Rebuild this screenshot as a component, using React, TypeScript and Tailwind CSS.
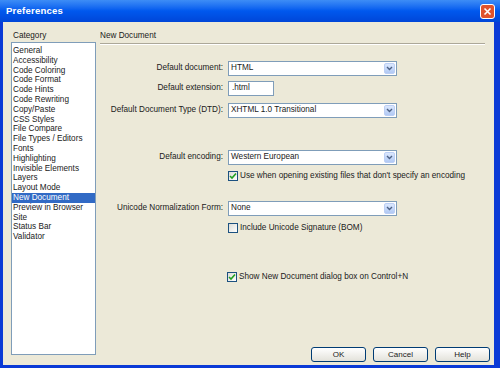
import React from 'react';

const categories = [
  'General',
  'Accessibility',
  'Code Coloring',
  'Code Format',
  'Code Hints',
  'Code Rewriting',
  'Copy/Paste',
  'CSS Styles',
  'File Compare',
  'File Types / Editors',
  'Fonts',
  'Highlighting',
  'Invisible Elements',
  'Layers',
  'Layout Mode',
  'New Document',
  'Preview in Browser',
  'Site',
  'Status Bar',
  'Validator',
];

function Select({ value }: { value: string }) {
  return (
    <div className="flex items-center w-[169px] h-[15px] bg-white border border-[#7f9db9] pl-[2px] pr-[1px]">
      <span className="flex-1 leading-none">{value}</span>
      <span className="w-[11px] h-[11px] rounded-[2px] bg-gradient-to-b from-[#dce8fd] to-[#b1c9f4] border border-[#bccff5] flex items-center justify-center">
        <svg width="7" height="5" viewBox="0 0 7 5">
          <path d="M1 1 L3.5 3.5 L6 1" stroke="#4d6185" strokeWidth="1.4" fill="none" />
        </svg>
      </span>
    </div>
  );
}

function Check({ checked, label }: { checked: boolean; label: string }) {
  return (
    <div className="flex items-center h-[10px] gap-[2px]">
      <span className="w-[10px] h-[10px] border border-[#1c5180] bg-gradient-to-br from-[#dcdcd7] to-white flex items-center justify-center">
        {checked && (
          <svg width="8" height="8" viewBox="0 0 8 8">
            <path d="M1 4 L3 6 L7 1.5" stroke="#21a121" strokeWidth="1.6" fill="none" />
          </svg>
        )}
      </span>
      <span className="leading-none">{label}</span>
    </div>
  );
}

function Row({ label, children, className }: { label: string; children: React.ReactNode; className?: string }) {
  return (
    <div className={'flex items-center gap-[5px] ' + (className ?? '')}>
      <span className="w-[123px] text-right leading-none">{label}</span>
      {children}
    </div>
  );
}

function Button({ children }: { children: React.ReactNode }) {
  return (
    <button className="w-[55px] h-[15px] rounded-[3px] border border-[#003c74] bg-gradient-to-b from-white to-[#e3e2da] text-[8px] leading-none">
      {children}
    </button>
  );
}

export default function App() {
  return (
    <div className="w-[500px] h-[368px] flex flex-col text-[8.2px] text-[#1a1a1a] font-['Liberation_Sans',Arial,sans-serif] overflow-hidden">
      <div className="h-[22px] flex items-center justify-between pl-[6px] pr-[5px] bg-gradient-to-b from-[#3d8df6] via-[#0058ee] to-[#0046d8]">
        <span className="text-white font-bold text-[9.6px] tracking-[0.2px]">Preferences</span>
        <span className="w-[15px] h-[15px] rounded-[3px] border border-white bg-[#e0532d] flex items-center justify-center">
          <svg width="9" height="9" viewBox="0 0 9 9">
            <path d="M1.5 1.5 L7.5 7.5 M7.5 1.5 L1.5 7.5" stroke="white" strokeWidth="1.6" />
          </svg>
        </span>
      </div>
      <div className="flex-1 flex bg-[#ece9d8] border-l-[3px] border-r-[6px] border-b-[3px] border-[#0a3ad6] pl-[8px] pt-[7px] pb-[3px]">
        <div className="w-[85px] flex flex-col pb-[7px]">
          <div className="h-[13px] leading-[13px] pl-[2px]">Category</div>
          <div className="flex-1 bg-white border border-[#7f9db9] pt-[3px]">
            {categories.map((c) => (
              <div
                key={c}
                className={
                  'h-[9.8px] leading-[9.8px] pl-[1px] whitespace-nowrap ' +
                  (c === 'New Document' ? 'bg-[#316ac5] text-white' : '')
                }
              >
                {c}
              </div>
            ))}
          </div>
        </div>
        <div className="w-[390px] ml-[4px] flex flex-col">
          <div className="h-[13px] leading-[13px]">New Document</div>
          <div className="mt-[1px] mr-[5px] border-t border-[#aca899] border-b border-b-white" />
          <Row label="Default document:" className="mt-[16px]">
            <Select value="HTML" />
          </Row>
          <Row label="Default extension:" className="mt-[5px]">
            <div className="w-[46px] h-[15px] bg-white border border-[#7f9db9] pl-[3px] flex items-center leading-none">.html</div>
          </Row>
          <Row label="Default Document Type (DTD):" className="mt-[7px]">
            <Select value="XHTML 1.0 Transitional" />
          </Row>
          <Row label="Default encoding:" className="mt-[32px]">
            <Select value="Western European" />
          </Row>
          <div className="mt-[6px] pl-[128px]">
            <Check checked label="Use when opening existing files that don't specify an encoding" />
          </div>
          <Row label="Unicode Normalization Form:" className="mt-[20px]">
            <Select value="None" />
          </Row>
          <div className="mt-[7px] pl-[128px]">
            <Check checked={false} label="Include Unicode Signature (BOM)" />
          </div>
          <div className="mt-[39px] pl-[127px]">
            <Check checked label="Show New Document dialog box on Control+N" />
          </div>
          <div className="mt-auto flex justify-end gap-[7px]">
            <Button>OK</Button>
            <Button>Cancel</Button>
            <Button>Help</Button>
          </div>
        </div>
      </div>
    </div>
  );
}
